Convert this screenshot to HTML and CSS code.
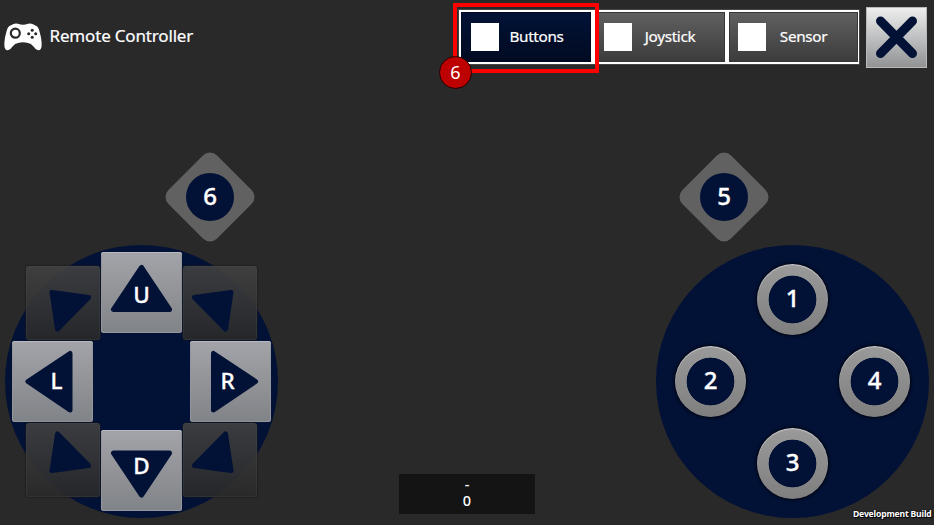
FILE: index.html
```html
<!DOCTYPE html>
<html lang="en">
<head>
<meta charset="utf-8">
<title>Remote Controller</title>
<link rel="stylesheet" href="styles.css">
</head>
<body>
<header class="topbar">
  <div class="brand">
    <svg class="gamepad" width="38" height="28" viewBox="0 0 38 28">
      <path d="M9.500 1Q11.500 0 14 .8Q19 2.500 24 .8Q26.500 0 28.500 1L32 2.800Q34.500 4 35.500 8.500Q38 17 37.600 23Q37.200 28 33.500 27Q31.500 26.500 29.500 23.500Q27 20.200 24 20Q19 18.500 14 20Q11 20.200 8.500 23.500Q6.500 26.500 4.500 27Q.800 28 .400 23Q0 17 2.500 8.500Q3.500 4 6 2.800Z" fill="#fff"/>
      <circle cx="11.300" cy="10.200" r="4.500" fill="none" stroke="#292929" stroke-width="2.200"/>
      <g fill="#292929"><circle cx="28.200" cy="7.200" r="1.500"/><circle cx="28.200" cy="14.200" r="1.500"/><circle cx="24.700" cy="10.700" r="1.500"/><circle cx="31.700" cy="10.700" r="1.500"/></g>
    </svg>
    <h1 class="title">Remote Controller</h1>
  </div>
  <nav class="tabs">
    <button class="tab tab-active"><span class="box"></span><span class="tab-label">Buttons</span></button>
    <button class="tab"><span class="box"></span><span class="tab-label">Joystick</span></button>
    <button class="tab"><span class="box"></span><span class="tab-label">Sensor</span></button>
    <div class="callout"><span class="callout-number">6</span></div>
  </nav>
  <button class="close" aria-label="Close">
    <svg width="61" height="61" viewBox="0 0 61 61"><path d="M14.500 14L46.500 46.500M46.500 14L14.500 46.500" stroke="#021136" stroke-width="9" stroke-linecap="round"/></svg>
  </button>
</header>
<main class="stage">
  <section class="side side-left">
    <div class="diamond">
      <svg class="diamond-shape" width="90" height="90" viewBox="0 0 90 90"><path d="M45 10.500L79.500 45L45 79.500L10.500 45Z" fill="#616161" stroke="#616161" stroke-width="20" stroke-linejoin="round"/></svg>
      <span class="disc">6</span>
    </div>
    <div class="pad dpad">
      <div class="diag tl"><svg width="74" height="74"><path class="arrow" d="M26 26.500L62.500 31.500L31.500 63Z"/></svg></div>
      <div class="key up"><svg width="81" height="81"><path class="arrow" d="M40.500 15.500L12.500 57.500H68.500Z"/></svg><span class="letter">U</span></div>
      <div class="diag tr"><svg width="74" height="74"><path class="arrow" d="M48 26.500L11.500 31.500L42.500 63Z"/></svg></div>
      <div class="key left"><svg width="81" height="81"><path class="arrow" d="M16 40.500L58 12.500V69Z"/></svg><span class="letter">L</span></div>
      <div class="key right"><svg width="81" height="81"><path class="arrow" d="M65.500 40.500L23.500 12.500V69Z"/></svg><span class="letter">R</span></div>
      <div class="diag bl"><svg width="74" height="74"><path class="arrow" d="M26 47.500L62.500 42.500L31.500 11Z"/></svg></div>
      <div class="key down"><svg width="81" height="81"><path class="arrow" d="M40.500 65L12.500 23H68.500Z"/></svg><span class="letter">D</span></div>
      <div class="diag br"><svg width="74" height="74"><path class="arrow" d="M48 47.500L11.500 42.500L42.500 11Z"/></svg></div>
    </div>
  </section>
  <section class="readout"><div>-</div><div>0</div></section>
  <section class="side side-right">
    <div class="diamond">
      <svg class="diamond-shape" width="90" height="90" viewBox="0 0 90 90"><path d="M45 10.500L79.500 45L45 79.500L10.500 45Z" fill="#616161" stroke="#616161" stroke-width="20" stroke-linejoin="round"/></svg>
      <span class="disc">5</span>
    </div>
    <div class="pad ring-pad">
      <span class="ring north">1</span>
      <span class="ring west">2</span>
      <span class="ring east">4</span>
      <span class="ring south">3</span>
    </div>
    <div class="build">Development Build</div>
  </section>
</main>
</body>
</html>
```

FILE: styles.css
```css
* { box-sizing: border-box; }
body {
  margin: 0;
  width: 934px;
  height: 525px;
  overflow: hidden;
  background: #292929;
  color: #fff;
  font-family: "Noto Sans", sans-serif;
}
button { font: inherit; color: inherit; border: 0; padding: 0; }
svg { display: block; }

.topbar {
  display: flex;
  align-items: flex-start;
  height: 152px;
  padding: 7px 7px 0 4px;
}
.brand { display: flex; align-items: center; height: 59px; gap: 7.5px; flex: 1; }
.title {
  margin: 0;
  padding-bottom: 2px;
  font-size: 17px;
  font-weight: 400;
  letter-spacing: -0.17px;
  white-space: nowrap;
  -webkit-text-stroke: 0.2px #fff;
}

.tabs {
  position: relative;
  display: grid;
  grid-template-columns: 130px 130px 129px;
  gap: 4px;
  width: 400px;
  height: 54px;
  margin: 3px 7px 0 0;
  padding: 2px 1px 2px 2px;
  background: #fff;
  box-shadow: 0 0 0 1px #454545;
}
.tab {
  display: flex;
  align-items: center;
  padding-left: 9px;
  background: linear-gradient(#606060, #3c3c3c);
  border: 1px solid #373737;
}
.tab + .tab { padding-left: 8px; }
.tab-active { background: linear-gradient(#021337, #010a20); border-color: #010a20; }
.box { width: 28px; height: 28px; background: #fff; }
.tab-label {
  flex: 1;
  padding: 0 16px 2px 0;
  font-size: 15.3px;
  letter-spacing: -0.35px;
  text-align: center;
  -webkit-text-stroke: 0.2px #fff;
}

.callout {
  position: absolute;
  left: -6px;
  top: -7px;
  width: 146px;
  height: 70px;
  border: 4px solid #f00;
}
.callout-number {
  position: absolute;
  left: -18px;
  top: 49px;
  width: 33px;
  height: 33px;
  border: 1px solid #200;
  border-radius: 50%;
  background: #bd0000;
  font-size: 18px;
  line-height: 30px;
  text-align: center;
}
.close {
  width: 61px;
  height: 61px;
  background: linear-gradient(#efefef, #8f9193);
  box-shadow: inset 0 0 0 1px #b9b9b9;
}

.stage { display: flex; justify-content: space-between; height: 373px; padding: 0 5px; }
.side { width: 273px; }
.diamond { display: grid; width: 90px; height: 90px; place-items: center; margin-left: 160px; }
.side-right .diamond { margin-left: 23px; }
.diamond > * { grid-area: 1 / 1; }
.disc, .ring { -webkit-text-stroke: 0.35px #fff; }
.disc {
  width: 48px;
  height: 48px;
  border-radius: 50%;
  background: #021136;
  font-size: 24px;
  font-weight: 500;
  line-height: 45px;
  text-align: center;
}
.pad {
  display: grid;
  width: 273px;
  height: 273px;
  margin-top: 3px;
  border-radius: 50%;
  background: #021136;
}
.dpad { grid-template: 89px 81px 89px / 89px 81px 89px; padding: 7px; }
.key, .diag { border-radius: 3px; }
.key {
  display: grid;
  width: 81px;
  height: 81px;
  background: linear-gradient(#a3a4a9, #808387);
  box-shadow: inset 0 1px #b9babd, inset 0 0 0 1px #94969a;
}
.key > * { grid-area: 1 / 1; }
.letter {
  place-self: center;
  font-size: 22.5px;
  font-weight: 500;
  line-height: 30px;
  -webkit-text-stroke: 0.3px #fff;
}
.arrow { fill: #021136; stroke: #021136; stroke-width: 5; stroke-linejoin: round; }
.up { grid-area: 1 / 2; }
.up .letter { padding-top: 5px; }
.left { grid-area: 2 / 1; }
.left .letter { padding: 0 0 2px 8px; }
.right { grid-area: 2 / 3; justify-self: end; }
.right .letter { padding: 0 6px 2px 0; }
.down { grid-area: 3 / 2; align-self: end; }
.down .letter { padding-bottom: 10px; }
.diag {
  width: 74px;
  height: 74px;
  background: linear-gradient(rgba(65, 65, 65, 0.9), rgba(41, 41, 41, 0.9));
  box-shadow: inset 0 0 0 1px rgba(80, 80, 80, 0.25), 0 0 1px 1px rgba(25, 25, 25, 0.5);
}
.tl { grid-area: 1 / 1; place-self: end; margin: 0 1px 1px 0; }
.tr { grid-area: 1 / 3; place-self: end start; margin: 0 0 1px 1px; }
.bl { grid-area: 3 / 1; place-self: start end; margin: 1px 1px 0 0; }
.br { grid-area: 3 / 3; place-self: start; margin: 1px 0 0 1px; }

.readout {
  align-self: flex-end;
  width: 136px;
  height: 40px;
  margin: 0 0 11px;
  padding-top: 2px;
  background: #141414;
  font-size: 14.5px;
  font-weight: 500;
  line-height: 16px;
  text-align: center;
}

.ring-pad { grid-template: repeat(3, 82px) / repeat(3, 82px); place-content: center; place-items: center; }
.ring {
  width: 71px;
  height: 71px;
  border-radius: 50%;
  background: radial-gradient(circle, #021136 23.5px, transparent 24.2px), linear-gradient(#9a9a9a, #7f7f7f);
  box-shadow: inset 0 1px 1px #d0d0d0, 0 0 3px 1px #03050c;
  font-size: 24px;
  font-weight: 500;
  line-height: 68px;
  text-align: center;
}
.north { grid-area: 1 / 2; }
.west { grid-area: 2 / 1; }
.east { grid-area: 2 / 3; }
.south { grid-area: 3 / 2; }

.build {
  width: 78px;
  margin: -10px 0 0 197px;
  font-size: 8.6px;
  font-weight: 700;
  line-height: 12px;
  white-space: nowrap;
  letter-spacing: -0.18px;
  text-shadow: 1px 1px #000, 0 0 2px #000;
}
```
